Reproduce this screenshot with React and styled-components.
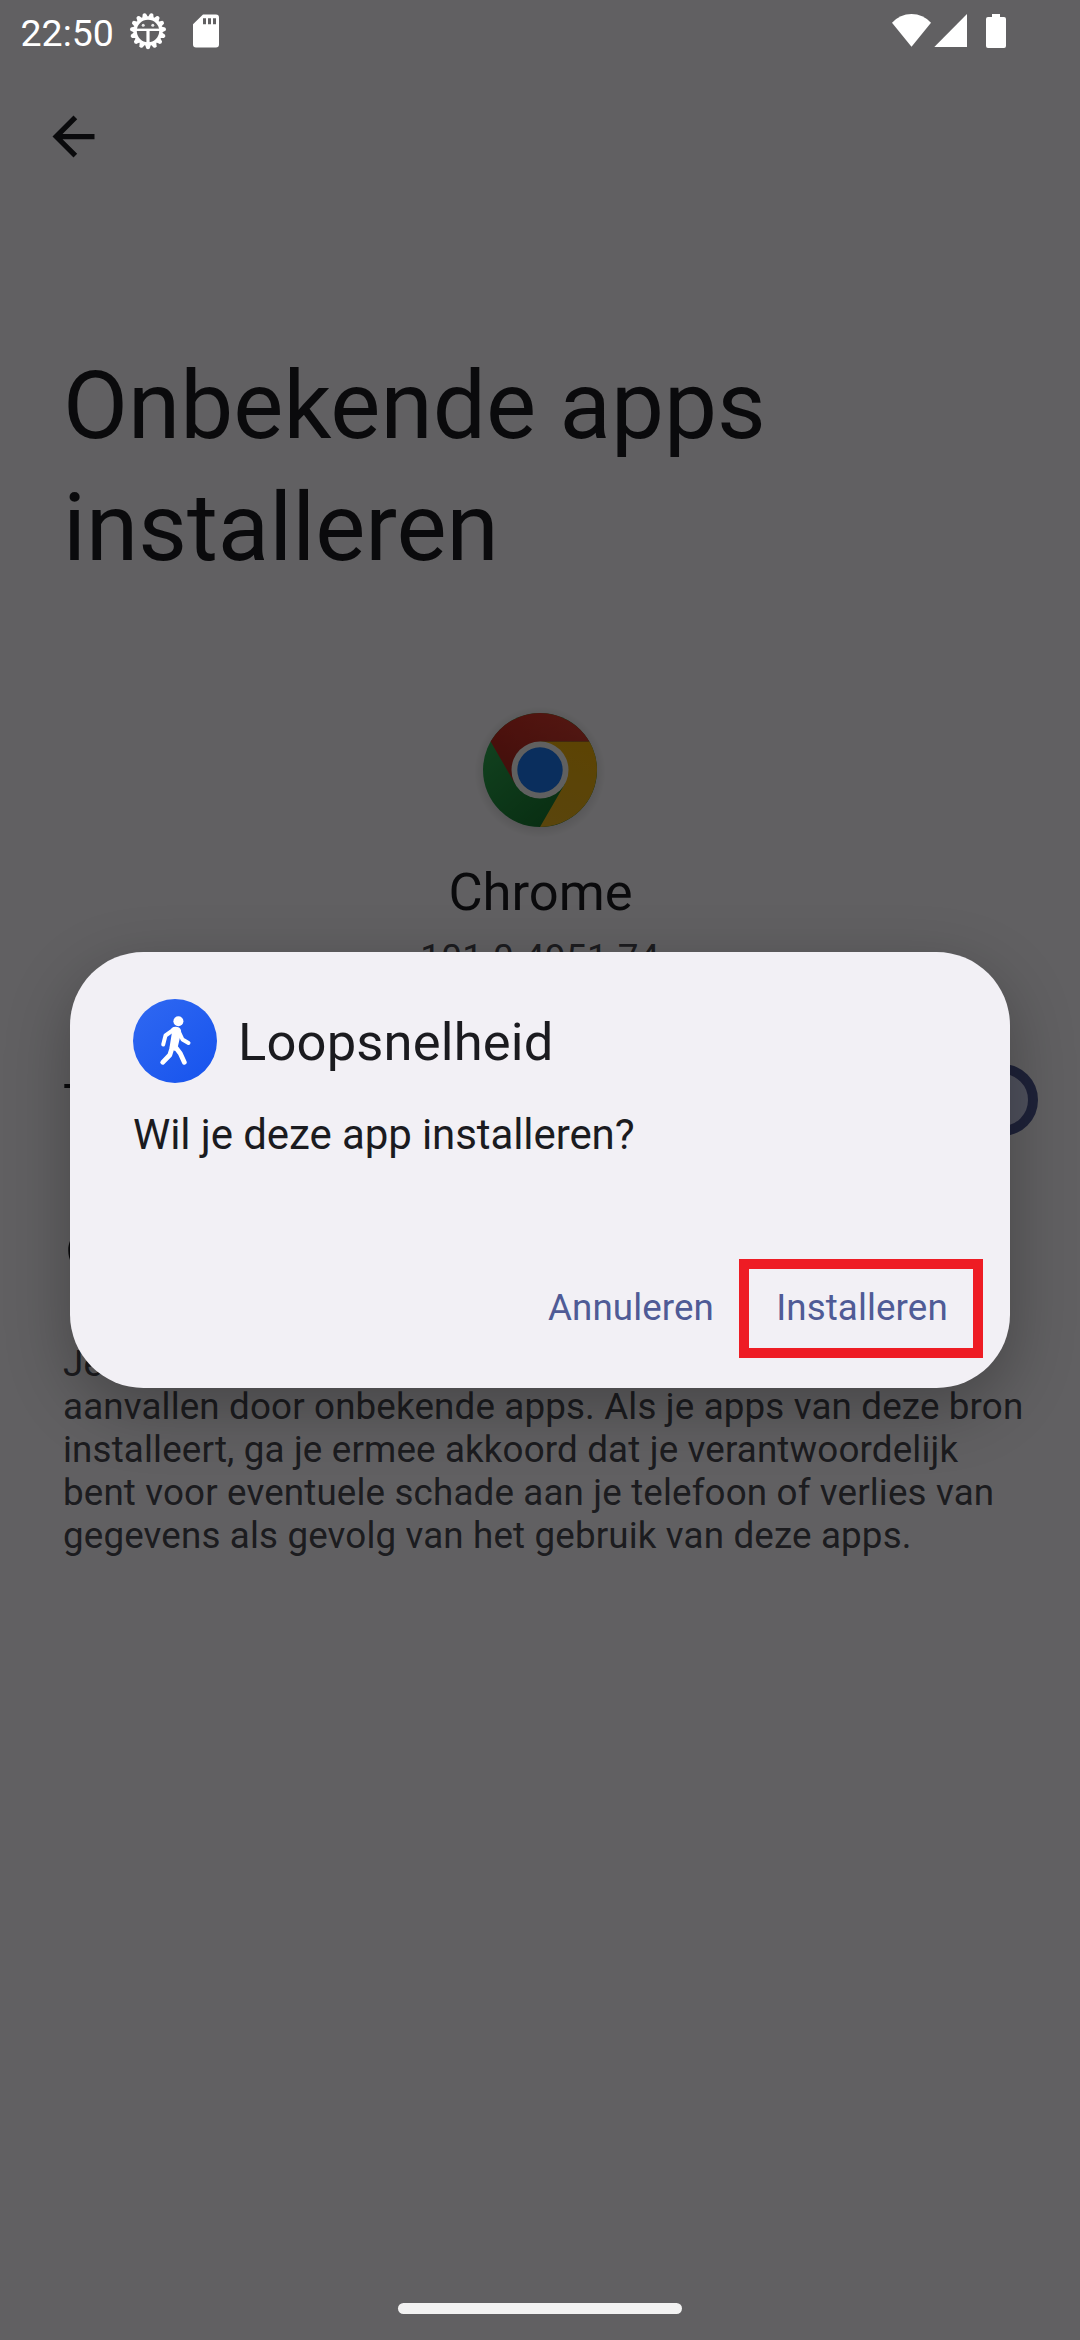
import React from "react";
import styled, { createGlobalStyle } from "styled-components";

const Global = createGlobalStyle`
  html, body { margin: 0; padding: 0; background: #f2f0f4; }
  body { font-family: Roboto, "Noto Sans", sans-serif; }
`;

const Phone = styled.div`
  position: relative;
  width: 1080px;
  height: 2340px;
  overflow: hidden;
  background: #f3f1f5;
`;

const Page = styled.main`
  display: flex;
  flex-direction: column;
  padding: 105px 0 0;
`;

const Toolbar = styled.header`
  display: flex;
  height: 63px;
  padding-left: 42px;
`;

const Heading = styled.h1`
  margin: 177px 63px 0;
  font-size: 94.5px;
  line-height: 122px;
  font-weight: 400;
  color: #1b1b1f;
`;

const AppHeader = styled.section`
  display: flex;
  flex-direction: column;
  align-items: center;
  margin-top: 107px;
`;

const AppName = styled.div`
  margin-top: 17px;
  padding-left: 1px;
  font-size: 52.5px;
  line-height: 62px;
  color: #1b1b1f;
`;

const Version = styled.div`
  margin-top: 13px;
  font-size: 36.75px;
  line-height: 43px;
  letter-spacing: 0.3px;
  color: #46464f;
`;

const SwitchRow = styled.div`
  display: flex;
  align-items: center;
  justify-content: space-between;
  height: 126px;
  margin-top: 58px;
  padding: 0 42px 0 63px;
  font-size: 52.5px;
  color: #1b1b1f;
`;

const SwitchLabel = styled.span`
  padding-top: 5px;
`;

const Track = styled.span`
  box-sizing: border-box;
  width: 136px;
  height: 72px;
  border: 10px solid #4d5690;
  border-radius: 36px;
  background: #c6cae8;
`;

const Footer = styled.section`
  display: flex;
  flex-direction: column;
  gap: 60px;
  margin-top: 56px;
  padding-left: 63px;
`;

const FooterText = styled.p`
  margin: 0;
  font-size: 36.75px;
  line-height: 43px;
  letter-spacing: 0.15px;
  white-space: nowrap;
  color: #46464f;
`;

const Scrim = styled.div`
  position: absolute;
  inset: 0;
  display: flex;
  align-items: center;
  justify-content: center;
  background: rgba(0, 0, 0, 0.6);
`;

const Dialog = styled.div`
  box-sizing: border-box;
  width: 940px;
  height: 436px;
  padding: 47px 27px 30px 63px;
  border-radius: 73.5px;
  background: #f2f0f5;
  box-shadow: 0 20px 64px rgba(0, 0, 0, 0.28);
  display: flex;
  flex-direction: column;
`;

const DialogTitle = styled.div`
  display: flex;
  align-items: center;
  gap: 21px;
  height: 84px;
  font-size: 52.5px;
  line-height: 62px;
  letter-spacing: 0.17px;
  color: #1b1b1f;
`;

const DialogName = styled.span`
  padding-top: 2px;
`;

const Message = styled.p`
  margin: 27px 0 0;
  font-size: 42px;
  line-height: 49px;
  letter-spacing: -0.09px;
  color: #1b1b1f;
`;

const Actions = styled.div`
  display: flex;
  align-items: center;
  justify-content: flex-end;
  gap: 25px;
  margin-top: auto;
`;

const Action = styled.button`
  box-sizing: border-box;
  width: ${(p) => (p.$marked ? "244px" : "auto")};
  height: 99px;
  padding: 0 0 2px;
  border: ${(p) => (p.$marked ? "10px solid #ee1c24" : "0")};
  background: transparent;
  font-family: inherit;
  font-size: 36.75px;
  letter-spacing: 0.1px;
  color: #4f5b96;
`;

const ActionLabel = styled.span`
  padding-left: ${(p) => p.$shift || 0}px;
`;

const StatusBar = styled.div`
  position: absolute;
  top: 0;
  left: 0;
  right: 0;
  display: flex;
  align-items: center;
  justify-content: space-between;
  height: 62px;
  padding: 0 70px 0 20.5px;
  color: #fff;
`;

const StatusGroup = styled.div`
  display: flex;
  align-items: center;
  gap: ${(p) => p.$gap}px;
`;

const Time = styled.span`
  font-size: 37.5px;
  line-height: 43px;
  margin-top: 5px;
`;

const NavHandle = styled.div`
  position: absolute;
  left: 398px;
  bottom: 26px;
  width: 284px;
  height: 11px;
  border-radius: 6px;
  background: #f2f2f2;
`;

const BackIcon = () => (
  <svg width="63" height="63" viewBox="0 0 24 24" fill="#1b1b1f">
    <path d="M20 11H7.83l5.59-5.59L12 4l-8 8 8 8 1.41-1.41L7.83 13H20v-2z" />
  </svg>
);

const InfoIcon = () => (
  <svg width="63" height="63" viewBox="0 0 24 24" fill="#1b1b1f">
    <path d="M11 7h2v2h-2zm0 4h2v6h-2zm1-9C6.48 2 2 6.48 2 12s4.48 10 10 10 10-4.48 10-10S17.52 2 12 2zm0 18c-4.41 0-8-3.59-8-8s3.59-8 8-8 8 3.59 8 8-3.59 8-8 8z" />
  </svg>
);

const ChromeLogo = () => (
  <svg width="148" height="148" viewBox="-74 -74 148 148">
    <defs>
      <radialGradient id="halo">
        <stop offset="0.8" stopColor="#000" stopOpacity="0.12" />
        <stop offset="1" stopColor="#000" stopOpacity="0" />
      </radialGradient>
      <linearGradient id="red" gradientUnits="userSpaceOnUse" x1="-49" y1="0" x2="49" y2="0">
        <stop offset="0" stopColor="#d93025" />
        <stop offset="1" stopColor="#ea4335" />
      </linearGradient>
      <linearGradient id="redShade" gradientUnits="userSpaceOnUse" x1="0" y1="-57" x2="0" y2="10">
        <stop offset="0" stopColor="#000" stopOpacity="0.1" />
        <stop offset="1" stopColor="#000" stopOpacity="0.25" />
      </linearGradient>
      <linearGradient id="yellow" gradientUnits="userSpaceOnUse" x1="10" y1="56" x2="40" y2="-28">
        <stop offset="0" stopColor="#e0ac20" />
        <stop offset="1" stopColor="#e6a90a" />
      </linearGradient>
      <linearGradient id="green" gradientUnits="userSpaceOnUse" x1="14" y1="50" x2="-50" y2="-26">
        <stop offset="0" stopColor="#16742f" />
        <stop offset="1" stopColor="#2ba04c" />
      </linearGradient>
    </defs>
    <circle cy="2" r="66" fill="url(#halo)" />
    <circle r="57" fill="url(#green)" />
    <path d="M0-28.5H49.36A57 57 0 0 1 0 57L24.68 14.25Z" fill="url(#yellow)" />
    <path d="M-49.36-28.5A57 57 0 0 1 49.36-28.5H0L-24.68 14.25Z" fill="url(#red)" />
    <path d="M-49.36-28.5A57 57 0 0 1 49.36-28.5H0L-24.68 14.25Z" fill="url(#redShade)" />
    <circle r="28.5" fill="#f0f0f0" />
    <circle r="22.7" fill="#1a73e8" />
  </svg>
);

const WalkIcon = () => (
  <svg width="84" height="84" viewBox="0 0 84 84">
    <defs>
      <linearGradient id="walk" x1="0.1" y1="0.1" x2="0.8" y2="0.9">
        <stop offset="0" stopColor="#2d66f1" />
        <stop offset="1" stopColor="#1a56ee" />
      </linearGradient>
    </defs>
    <circle cx="42" cy="42" r="42" fill="url(#walk)" />
    <circle cx="45.4" cy="22.2" r="5" fill="#fff" />
    <path d="M38.5 29.3Q42 26.8 46 28.6Q48.6 30.2 48 34L45 47L42 52L36.5 48.5L39 33Z" fill="#fff" />
    <g fill="none" stroke="#fff" strokeWidth="4" strokeLinecap="round" strokeLinejoin="round">
      <path d="M41 30.5L32.5 36.5L30.2 45.5" />
      <path d="M46 33L49.5 40.5L55.5 44" />
      <path d="M39.5 47.5L36.8 56L29.7 63.3" strokeWidth="4.8" />
      <path d="M42 47.5L47.3 54.5L51.3 63.3" strokeWidth="4.8" />
    </g>
  </svg>
);

const teeth = Array.from({ length: 15 }, (_, i) => (i + 0.5) * 24);

const DebugIcon = () => (
  <svg width="38" height="38" viewBox="-19 -19 38 38" fill="none" stroke="#fff">
    <circle r="12.9" strokeWidth="3.4" />
    {teeth.map((a) => (
      <path key={a} d="M-3-13.5L-1.7-17.4Q0-19 1.7-17.4L3-13.5Z" fill="#fff" stroke="none" transform={`rotate(${a})`} />
    ))}
    <path d="M-12-1.2H12" strokeWidth="2.4" />
    <path d="M0-1V13" strokeWidth="3.2" />
    <circle cx="-4.8" cy="-5.8" r="1.5" fill="#fff" fillOpacity="0.85" stroke="none" />
    <circle cx="4.8" cy="-5.8" r="1.5" fill="#fff" fillOpacity="0.85" stroke="none" />
  </svg>
);

const SdIcon = () => (
  <svg width="26" height="34" viewBox="0 0 26 34" fill="#fff">
    <path fillRule="evenodd" d="M10 0.5H23Q26 0.5 26 3.5V30.5Q26 33.5 23 33.5H3Q0 33.5 0 30.5V10.3ZM10 4.3V10.3H13V4.3ZM15 4.3V10.3H18V4.3ZM20 4.3V10.3H23V4.3Z" />
  </svg>
);

const SignalIcons = () => (
  <svg width="118" height="36" viewBox="892 13 118 36" fill="#fff">
    <path d="M892 22.8Q900 14 911.5 14T931 22.8L911.5 46.7Z" />
    <path d="M967 14V47H934.3Z" />
    <path d="M992 14H1000V17H1004Q1006 17 1006 19V46Q1006 48 1004 48H988Q986 48 986 46V19Q986 17 988 17H992Z" />
  </svg>
);

export default function App() {
  return (
    <Phone>
      <Global />
      <Page>
        <Toolbar><BackIcon /></Toolbar>
        <Heading>Onbekende apps<br />installeren</Heading>
        <AppHeader>
          <ChromeLogo />
          <AppName>Chrome</AppName>
          <Version>101.0.4951.74</Version>
        </AppHeader>
        <SwitchRow>
          <SwitchLabel>Toestaan van deze bron</SwitchLabel>
          <Track />
        </SwitchRow>
        <Footer>
          <InfoIcon />
          <FooterText>
            Je telefoon en persoonsgegevens zijn kwetsbaar voor<br />
            aanvallen door onbekende apps. Als je apps van deze bron<br />
            installeert, ga je ermee akkoord dat je verantwoordelijk<br />
            bent voor eventuele schade aan je telefoon of verlies van<br />
            gegevens als gevolg van het gebruik van deze apps.
          </FooterText>
        </Footer>
      </Page>
      <Scrim>
        <Dialog>
          <DialogTitle><WalkIcon /><DialogName>Loopsnelheid</DialogName></DialogTitle>
          <Message>Wil je deze app installeren?</Message>
          <Actions>
            <Action>Annuleren</Action>
            <Action $marked><ActionLabel $shift={2}>Installeren</ActionLabel></Action>
          </Actions>
        </Dialog>
      </Scrim>
      <StatusBar>
        <StatusGroup $gap={15}>
          <Time>22:50</Time>
          <StatusGroup $gap={26}><DebugIcon /><SdIcon /></StatusGroup>
        </StatusGroup>
        <SignalIcons />
      </StatusBar>
      <NavHandle />
    </Phone>
  );
}
